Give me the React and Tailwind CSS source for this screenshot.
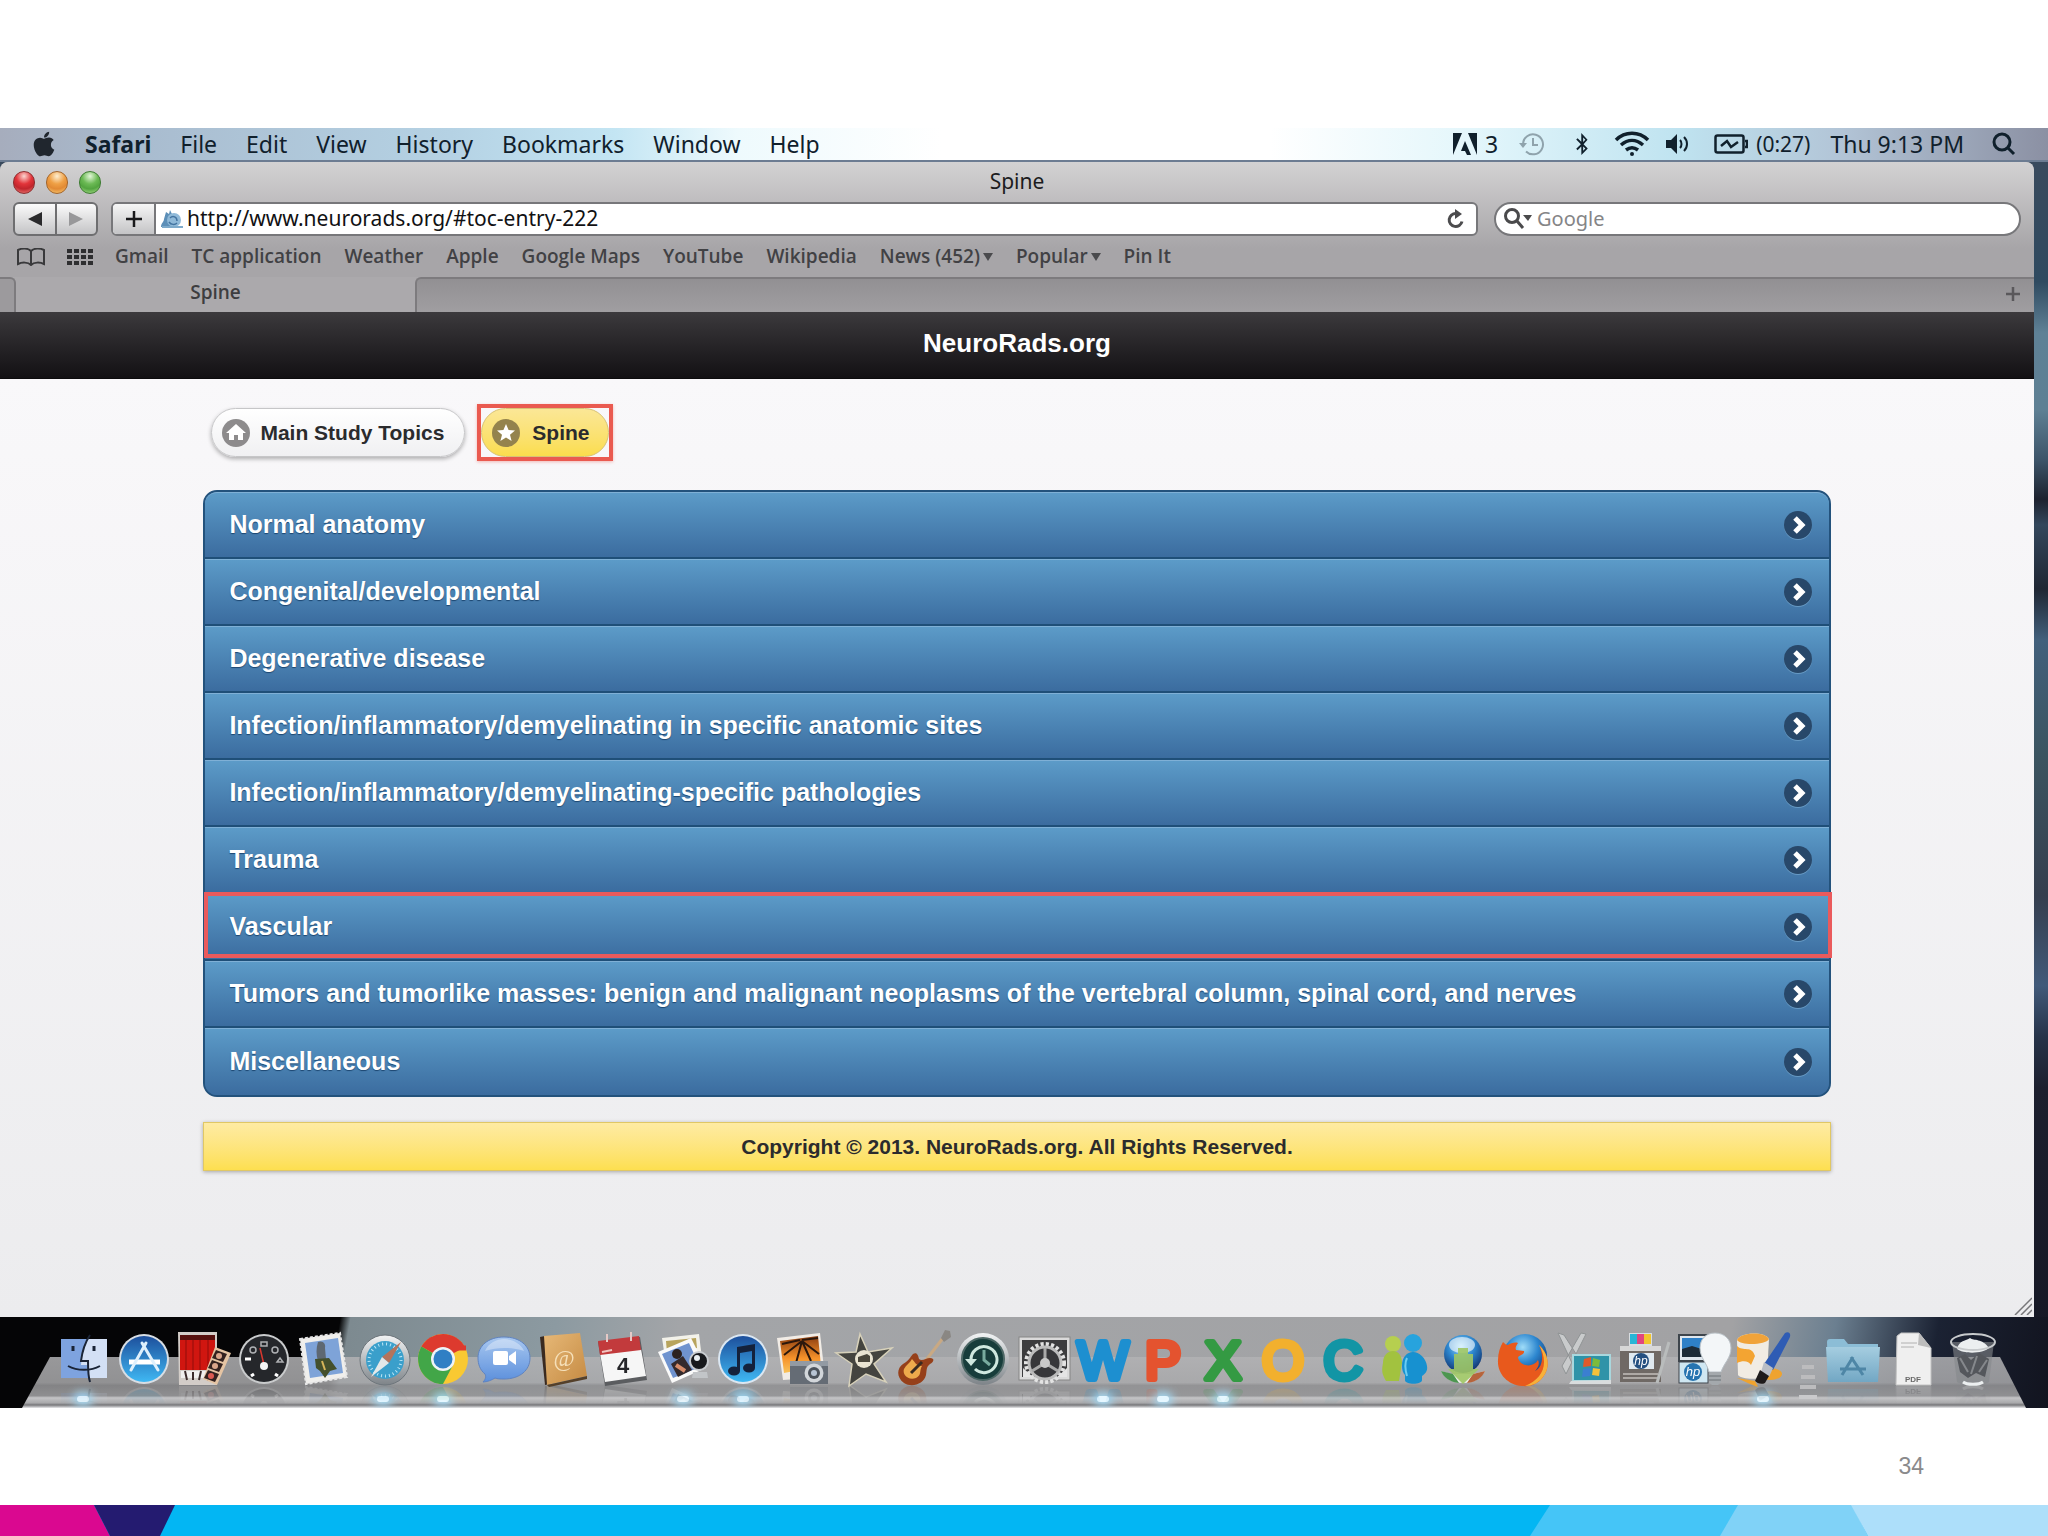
import { FaApple, FaBluetoothB } from "react-icons/fa";

const menus = ["File", "Edit", "View", "History", "Bookmarks", "Window", "Help"];

const bookmarks = [
  { label: "Gmail" },
  { label: "TC application" },
  { label: "Weather" },
  { label: "Apple" },
  { label: "Google Maps" },
  { label: "YouTube" },
  { label: "Wikipedia" },
  { label: "News (452)", menu: true },
  { label: "Popular", menu: true },
  { label: "Pin It" },
];

const topics = [
  "Normal anatomy",
  "Congenital/developmental",
  "Degenerative disease",
  "Infection/inflammatory/demyelinating in specific anatomic sites",
  "Infection/inflammatory/demyelinating-specific pathologies",
  "Trauma",
  "Vascular",
  "Tumors and tumorlike masses: benign and malignant neoplasms of the vertebral column, spinal cord, and nerves",
  "Miscellaneous",
];

// Shared gradients for the dock icons
function DockDefs() {
  return (
    <svg width="0" height="0" className="absolute" aria-hidden="true">
      <defs>
        <linearGradient id="blue" x1="0" y1="0" x2="0" y2="1">
          <stop offset="0" stopColor="#1d4f9c" />
          <stop offset="1" stopColor="#3fb8f3" />
        </linearGradient>
        <linearGradient id="pale" x1="0" y1="0" x2="0" y2="1">
          <stop offset="0" stopColor="#a9c8f0" />
          <stop offset="1" stopColor="#5b8fdc" />
        </linearGradient>
        <linearGradient id="steel" x1="0" y1="0" x2="0" y2="1">
          <stop offset="0" stopColor="#f2f4f5" />
          <stop offset="1" stopColor="#7d8388" />
        </linearGradient>
        <linearGradient id="sunset" x1="0" y1="0" x2="0" y2="1">
          <stop offset="0" stopColor="#8a3c10" />
          <stop offset="0.6" stopColor="#f6922a" />
          <stop offset="1" stopColor="#f9c35a" />
        </linearGradient>
        <linearGradient id="folder" x1="0" y1="0" x2="0" y2="1">
          <stop offset="0" stopColor="#a5cde0" />
          <stop offset="1" stopColor="#72a7c4" />
        </linearGradient>
        <linearGradient id="leather" x1="0" y1="0" x2="1" y2="1">
          <stop offset="0" stopColor="#e6b877" />
          <stop offset="1" stopColor="#c58a42" />
        </linearGradient>
        <radialGradient id="globe" cx="0.45" cy="0.3" r="0.7">
          <stop offset="0" stopColor="#9fdcf8" />
          <stop offset="0.5" stopColor="#2c86cf" />
          <stop offset="1" stopColor="#12346f" />
        </radialGradient>
      </defs>
    </svg>
  );
}

function Letter({ children, color }) {
  return (
    <text x="30" y="51" textAnchor="middle" fontFamily="Liberation Sans, sans-serif" fontSize="54" fill={color} stroke={color} strokeWidth="6" strokeLinejoin="round">
      {children}
    </text>
  );
}

const dockApps = [
  {
    name: "Finder",
    running: true,
    art: (
      <>
        <rect x="8" y="11" width="46" height="39" fill="#7ea3df" />
        <path d="M35 11h19v39H36c-1-5-1-9-1-13h-7c1-10 3-19 7-26z" fill="#d3e0f5" />
        <path d="M37 7c-6 9-8 18-9 26h7c0 8 0 15 2 21" fill="none" stroke="#1a2436" strokeWidth="2" />
        <path d="M15 38c9 5 23 5 32 0" fill="none" stroke="#1a2436" strokeWidth="2" />
        <path d="M20 18v5M41 18v5" stroke="#1a2436" strokeWidth="3" />
      </>
    ),
  },
  {
    name: "App Store",
    art: (
      <>
        <circle cx="31" cy="31" r="25" fill="#d8dee4" />
        <circle cx="31" cy="31" r="23" fill="url(#blue)" />
        <path d="M16 34h31" stroke="#fff" strokeWidth="5" />
        <path d="M33 15 18 42M29 15l16 27" stroke="#dff0fc" strokeWidth="3" strokeLinecap="round" />
      </>
    ),
  },
  {
    name: "Photo Booth",
    art: (
      <>
        <path d="M5 4h39v53H6z" fill="#d3cdc8" />
        <path d="M7 10h35v32H7z" fill="#d01610" />
        <path d="M7 7h35v5H7z" fill="#57100d" />
        <path d="M13 12v30M20 12v30M27 12v30M35 12v30" stroke="#b0110d" strokeWidth="2" />
        <path d="M8 43h34v7H8z" fill="#f1efee" />
        <path d="M12 43l2 9M20 44v8M28 43l-2 9M35 44v9" stroke="#3b2a2a" strokeWidth="2" />
        <path d="M42 19l16 6-14 32-14-6z" fill="#e5c4a3" />
        <path d="M43 22l11 4-4 8-11-4zM39 32l11 4-4 8-11-4zM35 42l11 4-4 8-11-4z" fill="#33211f" />
        <circle cx="46" cy="28" r="3" fill="#d9a58b" />
        <circle cx="42" cy="38" r="3" fill="#d9a58b" />
        <circle cx="38" cy="48" r="3" fill="#dc5a52" />
      </>
    ),
  },
  {
    name: "Dashboard",
    art: (
      <>
        <circle cx="31" cy="31" r="25" fill="#c9cbcc" />
        <circle cx="31" cy="31" r="23" fill="#25272b" />
        <g fill="none" stroke="#aeb0b3" strokeWidth="1.5">
          <circle cx="20" cy="22" r="3" />
          <circle cx="42" cy="22" r="3" />
          <path d="M28 14h6v4h-6zM44 34l3-4 3 4z" />
        </g>
        <path d="M12 31h6M21 46l-3 2M42 46l3 2" stroke="#fff" strokeWidth="3" />
        <path d="M31 37 27 20" stroke="#d8382f" strokeWidth="1.5" />
        <circle cx="31" cy="38" r="4" fill="#f5f5f5" />
      </>
    ),
  },
  {
    name: "Mail",
    art: (
      <>
        <path d="M7 11l40-6 7 44-41 7z" fill="#f0efec" stroke="#e6e6e6" strokeWidth="2" strokeDasharray="3 2" />
        <path d="M12 15l33-5 5 35-33 5z" fill="#7ea3d8" />
        <path d="M25 14c5-2 8 2 7 6l1 11-8 2c-2-6-2-13 0-19z" fill="#5e6872" />
        <path d="M22 31l14-1 8 11-7 2-5 7-5-7-4-3z" fill="#44502c" />
        <path d="M29 33l3 9" stroke="#d7b65a" strokeWidth="2" />
      </>
    ),
  },
  {
    name: "Safari",
    running: true,
    art: (
      <>
        <circle cx="32" cy="32" r="25" fill="url(#steel)" stroke="#6d757b" />
        <circle cx="32" cy="32" r="19" fill="#3a9fcb" />
        <circle cx="32" cy="32" r="16" fill="none" stroke="#bde6f5" strokeWidth="3" strokeDasharray="1 3" />
        <path d="M48 14 36 35l-7-6z" fill="#b4745c" />
        <path d="M18 49l11-20 7 6z" fill="#e3e8e9" />
      </>
    ),
  },
  {
    name: "Chrome",
    running: true,
    art: (
      <>
        <circle cx="30" cy="31" r="25" fill="#f9c932" />
        <path d="M30 31 8.400 18.500A25 25 0 0 1 52 19z" fill="#dd3a2e" />
        <path d="M30 31 8.400 18.500A25 25 0 0 0 30 56l10-19z" fill="#42a648" />
        <path d="M30 20h23" stroke="#dd3a2e" strokeWidth="5" />
        <circle cx="30" cy="31" r="12" fill="#eef3f6" />
        <circle cx="30" cy="31" r="9.500" fill="#2f7fc4" />
      </>
    ),
  },
  {
    name: "iChat",
    art: (
      <>
        <path d="M31 9c16 0 26 9 26 21S47 51 31 51c-3 0-7 0-9-1-3 2-8 4-12 4 3-3 3-6 2-8C7 42 5 36 5 30 5 18 15 9 31 9z" fill="url(#pale)" stroke="#5f83c0" />
        <path d="M12 23c3-8 12-12 19-12s17 4 20 12c-12-4-27-4-39 0z" fill="#fff" opacity="0.35" />
        <rect x="20" y="23" width="15" height="14" rx="2" fill="#fff" />
        <path d="M36 28l7-5v14l-7-5z" fill="#fff" />
      </>
    ),
  },
  {
    name: "Address Book",
    art: (
      <>
        <path d="M7 9l5-1 5 48-5 1z" fill="#3a2a20" />
        <path d="M11 8l36-3 7 43-40 9z" fill="url(#leather)" />
        <path d="M14 57l40-9v3l-38 8z" fill="#54402a" />
        <text x="31" y="38" textAnchor="middle" fontFamily="Liberation Serif, serif" fontSize="23" fill="#f5dfb8">@</text>
      </>
    ),
  },
  {
    name: "iCal",
    art: (
      <>
        <path d="M5 14l42-5 7 43-42 6z" fill="#5b5d60" />
        <path d="M7 25l41-4 5 27-41 6z" fill="#f6f6f6" />
        <path d="M5 13l41-5 2 14-41 5z" fill="#c23a3c" />
        <path d="M14 6v8M38 4v9" stroke="#e6c9c6" strokeWidth="2" />
        <path d="M9 24l10-2" stroke="#f1c3bf" strokeWidth="2" />
        <text x="30" y="45" textAnchor="middle" fontFamily="Liberation Sans, sans-serif" fontWeight="700" fontSize="22" fill="#26262a">4</text>
      </>
    ),
  },
  {
    name: "Preview",
    running: true,
    art: (
      <>
        <path d="M9 10l37-4 4 33-36 4z" fill="#f3f2ea" />
        <path d="M13 13l30-3 1 10-30 5z" fill="#b8a45c" />
        <path d="M5 24l33-14 15 30-34 15z" fill="#fafafa" />
        <path d="M9 26l27-11 11 24-27 11z" fill="#6f93cf" />
        <circle cx="24" cy="26" r="5" fill="#2c2220" />
        <path d="M18 36l12-8 9 14-14 7z" fill="#342a2c" />
        <path d="M23 37l9 6" stroke="#d68c6a" strokeWidth="4" />
        <circle cx="46" cy="33" r="9" fill="#17191d" stroke="#c8ccd0" strokeWidth="2" />
        <circle cx="44" cy="30" r="3" fill="#e8eef2" />
        <path d="M40 44h14l1 6H39z" fill="#c2c5c8" />
      </>
    ),
  },
  {
    name: "iTunes",
    running: true,
    art: (
      <>
        <circle cx="30" cy="31" r="25" fill="#dbe7f2" />
        <circle cx="30" cy="31" r="23" fill="url(#blue)" />
        <path d="M24 19l18-3v24h-3V23l-12 2v18h-3z" fill="#14223c" />
        <ellipse cx="21" cy="43" rx="6" ry="4.500" fill="#14223c" />
        <ellipse cx="36" cy="40" rx="6" ry="4.500" fill="#14223c" />
      </>
    ),
  },
  {
    name: "iPhoto",
    art: (
      <>
        <path d="M4 10l43-5 5 44-42 3z" fill="#f1ece6" />
        <path d="M7 13l38-5 3 30-37 7z" fill="url(#sunset)" />
        <path d="M29 13 11 27M29 13l-6 22M29 13l9 20M29 13l17 13M27 12l-18 4M29 12l16-2" stroke="#2b170c" strokeWidth="2" />
        <path d="M17 33h38v23H17z" fill="#656c75" />
        <path d="M17 33h38v5H17z" fill="#929aa3" />
        <circle cx="41" cy="45" r="9.500" fill="#d2d6da" />
        <circle cx="41" cy="45" r="6" fill="#4b525b" />
        <circle cx="41" cy="45" r="3" fill="#b7c4d4" />
      </>
    ),
  },
  {
    name: "iMovie",
    art: (
      <>
        <path d="M27 6l8 18 24-4-18 16 12 18-20-8-17 12 3-22L3 25l20-1z" fill="#44443f" stroke="#d7d1ba" strokeWidth="1.500" />
        <circle cx="31" cy="31" r="9" fill="#e9e4d2" />
        <path d="M25 29l9-3 3 2v6H25z" fill="#4a473c" />
      </>
    ),
  },
  {
    name: "GarageBand",
    art: (
      <>
        <path d="M30 36 50 10" stroke="#c9a983" strokeWidth="3" />
        <path d="M48 10l4-8 5 1 1 6-7 5z" fill="#8a8783" />
        <path d="M20 26c4-2 5 1 6 5 3 3 7-1 11-1 5 0 4 4 0 6-4 3-3 6-4 11-2 9-14 13-22 8-8-6-7-15-1-19 6-3 7-7 10-10z" fill="#96401a" />
        <path d="M19 31c3 3 4 7 10 7-3 5 0 9-6 12-8 3-14-4-12-9 2-4 6-6 8-10z" fill="#edaa4c" />
        <path d="M18 45l11-11" stroke="#3a2a20" strokeWidth="3" />
      </>
    ),
  },
  {
    name: "Time Machine",
    art: (
      <>
        <circle cx="30" cy="31" r="26" fill="url(#steel)" />
        <circle cx="30" cy="31" r="21" fill="#173d3b" stroke="#4c6765" strokeWidth="2" />
        <path d="M18 32a13 13 0 1 1 4 9" fill="none" stroke="#cfe8df" strokeWidth="3" />
        <path d="M12 31h12l-6 7z" fill="#cfe8df" />
        <path d="M31 22v10l6 5" fill="none" stroke="#78ab9f" strokeWidth="3" />
      </>
    ),
  },
  {
    name: "System Preferences",
    art: (
      <>
        <rect x="6" y="9" width="51" height="43" fill="#dadada" stroke="#868686" />
        <rect x="9" y="12" width="45" height="37" fill="#3c3c3e" />
        <path d="M12 49a20 20 0 1 1 40 0" fill="none" stroke="#d7d7d7" strokeWidth="0" />
        <circle cx="32" cy="35" r="18" fill="none" stroke="#e3e3e3" strokeWidth="6" strokeDasharray="3 2" />
        <circle cx="32" cy="35" r="16" fill="#37373a" stroke="#bcbcbc" strokeWidth="3" />
        <path d="M32 35V20M32 35l13 8M32 35l-13 8" stroke="#a9a9a9" strokeWidth="3" />
        <circle cx="32" cy="35" r="5" fill="#c9c9c9" />
        <path d="M10 40l10 9H10zM54 40l-10 9h10z" fill="#e5e5e5" />
      </>
    ),
  },
  { name: "Word", running: true, art: <Letter color="#1d8fd0">W</Letter> },
  { name: "PowerPoint", running: true, art: <Letter color="#e4532f">P</Letter> },
  { name: "Excel", running: true, art: <Letter color="#349a43">X</Letter> },
  { name: "Outlook", art: <Letter color="#f2b02e">O</Letter> },
  { name: "Communicator", art: <Letter color="#1295a5">C</Letter> },
  {
    name: "Messenger",
    art: (
      <>
        <circle cx="20" cy="16" r="8" fill="#b6cf4f" />
        <path d="M10 35c0-8 5-12 10-12s9 4 9 12l-3 18H13c-3-6-5-8-3-18z" fill="#a2c23f" />
        <circle cx="40" cy="15" r="9" fill="#27a3dd" />
        <path d="M29 38c0-9 5-14 11-14s13 6 14 14c1 5-2 8-5 10v4c0 5-17 5-17 0v-5c-2-2-3-5-3-9z" fill="#1791d0" />
        <path d="M34 30c-2 4-2 11 0 18" stroke="#6ccdf2" strokeWidth="2" fill="none" />
      </>
    ),
  },
  {
    name: "Download Manager",
    art: (
      <>
        <circle cx="30" cy="26" r="19" fill="url(#globe)" />
        <ellipse cx="29" cy="17" rx="13" ry="8" fill="#fff" opacity="0.6" />
        <path d="M8 43c4 8 12 12 22 12s18-4 22-12l-12 3H18z" fill="#edf0ea" />
        <path d="M52 43c-3 7-9 11-18 12l6-9z" fill="#b6643c" />
        <path d="M8 43c3 7 9 11 18 12l-6-9z" fill="#4d9650" />
        <path d="M25 20h10v6h5v15h6L30 56 15 41h6V26h4z" fill="#9fc765" opacity="0.9" />
      </>
    ),
  },
  {
    name: "Firefox",
    art: (
      <>
        <circle cx="32" cy="28" r="22" fill="url(#globe)" />
        <path d="M10 14c2 2 3 3 5 3 3-2 7-3 10-2-2 3-3 5-2 7l8 1c1 4-6 4-6 7 3 9 15 10 20 2 2 4 0 8-3 11 8-4 9-16 4-26 9 8 11 20 6 29-5 9-13 13-23 12C14 57 4 45 5 32c0-7 2-13 5-18z" fill="#e8591c" />
        <path d="M46 17c9 8 11 20 6 29-5 9-13 12-20 12 12-5 19-13 19-24 0-6-2-12-5-17z" fill="#f6b13a" />
      </>
    ),
  },
  {
    name: "Remote Desktop",
    art: (
      <>
        <path d="M5 5l6 2 14 22-6 6zM33 6l-5-1L9 38l4 8z" fill="#c9cbcc" stroke="#8f9394" />
        <rect x="20" y="27" width="37" height="26" fill="#2f93a8" stroke="#a9d7dd" strokeWidth="2" />
        <path d="M18 53l40-1v4H16z" fill="#d9dcdd" />
        <path d="M31 31l7-2v9l-8 1z" fill="#df5a2c" />
        <path d="M40 30l7 2-1 7-7-1z" fill="#7dbb3c" />
        <path d="M30 41l8-1-1 8-8 1z" fill="#3b7fd0" />
        <path d="M40 40l7 1-1 7-7-1z" fill="#f3c13a" />
      </>
    ),
  },
  {
    name: "HP Device Manager",
    art: (
      <>
        <path d="M16 5h23v13H16z" fill="#d9dde0" />
        <path d="M17 6h7v10h-7z" fill="#29b6d6" />
        <path d="M24 6h7v10h-7z" fill="#e1467f" />
        <path d="M31 6h7v10h-7z" fill="#f2c62d" />
        <path d="M7 18h41v36H7z" fill="#6f6965" />
        <path d="M7 18h41v5H7z" fill="#d7d7d7" />
        <rect x="16" y="25" width="25" height="16" fill="#dfe9f0" />
        <circle cx="28" cy="33" r="8" fill="#234f80" />
        <text x="28" y="37" textAnchor="middle" fontFamily="Liberation Sans, sans-serif" fontStyle="italic" fontSize="12" fill="#fff">hp</text>
        <path d="M10 46h35M10 50h35" stroke="#c3bfbb" strokeWidth="1.500" />
        <path d="M56 14 44 55" stroke="#b9bcbc" strokeWidth="3" />
      </>
    ),
  },
  {
    name: "HP Utility",
    art: (
      <>
        <rect x="6" y="7" width="29" height="26" fill="#dfe7ee" stroke="#3e454c" strokeWidth="2" />
        <path d="M9 10h23v13H9z" fill="#2e80c7" />
        <path d="M9 21l10-3 13 4v7H9z" fill="#1c2b38" />
        <rect x="6" y="34" width="29" height="21" fill="#cfe7f2" stroke="#3e454c" />
        <circle cx="20" cy="44" r="9" fill="#2774b0" />
        <text x="20" y="48" textAnchor="middle" fontFamily="Liberation Sans, sans-serif" fontStyle="italic" fontSize="13" fill="#fff">hp</text>
        <path d="M42 5c9 0 16 6 16 15 0 10-7 15-10 24H36c-2-9-9-14-9-24 0-9 6-15 15-15z" fill="#f3f6f8" stroke="#b8c0c6" />
        <path d="M36 44h12v10l-3 3h-6l-3-3z" fill="#a4a9ad" />
        <path d="M36 48h12M36 52h12" stroke="#6d7276" />
      </>
    ),
  },
  {
    name: "Paint",
    running: true,
    art: (
      <>
        <ellipse cx="37" cy="46" rx="12" ry="6" fill="#eea32f" />
        <path d="M4 12c3-8 28-9 32-1l-2 36c-5 5-25 5-29 0z" fill="#f1ece3" />
        <path d="M4 12c3-8 28-9 32-1-3 6-28 7-32 1z" fill="#f0a33a" />
        <path d="M4 18c6 6 15-1 18 10l-4 9c-2-4-8-5-14-2z" fill="#f3a432" />
        <path d="M52 5c4-2 7 1 4 6L40 42l-9-6z" fill="#2f5cb4" />
        <path d="M31 34l9 6-4 9-8-5z" fill="#b9bec5" />
        <path d="M27 42l9 6-4 7c-4 2-8 0-10-2z" fill="#1e1b1b" />
        <path d="M4 50l18 3 3 6-8-3z" fill="#eea32f" />
      </>
    ),
  },
];

const dockStack = [
  {
    name: "Applications",
    art: (
      <>
        <path d="M4 14c0-2 1-3 3-3h14l4 5h30v33H5z" fill="#8cbdd6" />
        <path d="M3 19h54l-2 35H5z" fill="url(#folder)" />
        <path d="M30 29 19 47M28 29l12 18M17 41h26" stroke="#4e86a6" strokeWidth="3" />
      </>
    ),
  },
  {
    name: "Document",
    art: (
      <>
        <path d="M14 8l4-3h18l12 15v37H13z" fill="#efefef" stroke="#c2c2c2" />
        <path d="M36 5l12 15-13-3z" fill="#bcbcbc" />
        <path d="M18 15h16M18 19h13" stroke="#b0b0b0" />
        <text x="30" y="54" textAnchor="middle" fontFamily="Liberation Sans, sans-serif" fontWeight="700" fontSize="8" fill="#6a6a6a">PDF</text>
      </>
    ),
  },
  {
    name: "Trash",
    art: (
      <>
        <path d="M9 14h42l-5 40c-5 4-27 4-32 0z" fill="#85888c" opacity="0.6" />
        <path d="M14 30l8-4 6 6 8-7 10 6-4 18-9-4-8 5-8-6z" fill="#54575c" />
        <path d="M17 30l8 14M34 28l-6 18M44 32l-8 12" stroke="#85888c" strokeWidth="2" />
        <path d="M14 21c2-9 9-8 13-11 4 3 12 0 19 10-6 6-26 6-32 1z" fill="#eceff0" />
        <ellipse cx="30" cy="14" rx="22" ry="8" fill="none" stroke="#c7cacc" strokeWidth="2" />
        <path d="M20 54c4 3 16 3 20 0" stroke="#eceff0" strokeWidth="3" fill="none" />
      </>
    ),
  },
];

function DockIcon({ app }) {
  return (
    <button type="button" aria-label={app.name} className="flex w-[60px] flex-col items-center pt-[11px]">
      <svg viewBox="0 0 60 64" className="block h-16 w-[60px] overflow-visible [-webkit-box-reflect:below_-13px_linear-gradient(transparent_60%,rgba(0,0,0,0.3))]">
        {app.art}
      </svg>
      {app.running && (
        <span className="mt-1 h-1.5 w-3 rounded-full bg-[#e6f7ff] shadow-[0_0_8px_4px_#a5d8f2]" />
      )}
    </button>
  );
}

function MenuBar() {
  return (
    <header className="flex h-[34px] items-center justify-between border-b-2 border-[#6c7c92] bg-[linear-gradient(90deg,#a6adbd_0%,#a9bccf_7%,#b5d2e4_22%,#c3e5f3_30%,#eefafd_36%,#ffffff_46%,#ffffff_62%,#e3f6fb_72%,#bfe3f0_82%,#b2c4d6_90%,#8b90a3_100%)] pl-8 pr-8 font-['Noto_Sans','Open_Sans',sans-serif] text-[23px] leading-8 text-[#10202c]">
      <nav className="flex items-center gap-[29px]">
        <button type="button" aria-label="Apple menu">
          <FaApple className="h-7 w-6 text-[#20262e]" />
        </button>
        <button type="button" className="font-bold">Safari</button>
        {menus.map((m) => (
          <button type="button" key={m}>{m}</button>
        ))}
      </nav>
      <div className="flex items-center">
        <svg viewBox="0 0 24 22" className="h-[22px] w-6">
          <path d="M0 0h9L0 22zM15 0h9v22zM12 8l6 14h-4l-2-4H8z" fill="#10202c" />
        </svg>
        <span className="ml-2">3</span>
        <svg viewBox="0 0 28 24" className="ml-5 h-6 w-7" fill="none" stroke="#8fa3ac" strokeWidth="2">
          <path d="M5 12a10 10 0 1 1 3 7.500" />
          <path d="M15 6v7h5" />
          <path d="M1 11h8l-4 5z" fill="#8fa3ac" stroke="none" />
        </svg>
        <FaBluetoothB className="ml-7 h-[22px] w-4" />
        <svg viewBox="0 0 36 26" className="ml-6 h-[26px] w-9" fill="none" stroke="#10202c" strokeWidth="3.500">
          <path d="M2 9c9-9 23-9 32 0" />
          <path d="M7 14c7-6 15-6 22 0" />
          <path d="M12 19c4-3 8-3 12 0" />
          <circle cx="18" cy="23" r="2" fill="#10202c" stroke="none" />
        </svg>
        <svg viewBox="0 0 24 20" className="ml-4 h-5 w-6">
          <path d="M0 6h5l6-6v20l-6-6H0z" fill="#10202c" />
          <path d="M14 6c2 2 2 6 0 8M18 3c4 4 4 10 0 14" fill="none" stroke="#10202c" strokeWidth="2" />
        </svg>
        <svg viewBox="0 0 34 20" className="ml-6 h-5 w-[34px]" fill="none" stroke="#10202c" strokeWidth="2.500">
          <rect x="1.500" y="1.500" width="28" height="17" rx="2" />
          <path d="M31 7h2v6h-2" />
          <path d="M7 12l6-5 4 6 7-5" />
        </svg>
        <span className="ml-2 text-[21px]">(0:27)</span>
        <span className="ml-5">Thu 9:13 PM</span>
        <button type="button" aria-label="Spotlight" className="ml-7">
          <svg viewBox="0 0 24 24" className="h-6 w-6" fill="none" stroke="#10202c" strokeWidth="3">
            <circle cx="10" cy="10" r="8" />
            <path d="M16 16l6 6" />
          </svg>
        </button>
      </div>
    </header>
  );
}

function Toolbar() {
  return (
    <div className="flex h-[34px] items-stretch px-[13px] font-['Noto_Sans','Open_Sans',sans-serif]">
      <div className="flex w-[85px] rounded-md border-2 border-[#6e6e70] bg-gradient-to-b from-[#fbfbfb] to-[#c4c4c6]">
        <button type="button" aria-label="Back" className="flex flex-1 items-center justify-center border-r-2 border-[#6e6e70]">
          <svg viewBox="0 0 14 14" className="h-3.5 w-3.5"><path d="M14 0v14L0 7z" fill="#2a2a2c" /></svg>
        </button>
        <button type="button" aria-label="Forward" className="flex flex-1 items-center justify-center">
          <svg viewBox="0 0 14 14" className="h-3.5 w-3.5"><path d="M0 0v14l14-7z" fill="#98989a" /></svg>
        </button>
      </div>
      <div className="ml-[13px] flex flex-1 items-stretch overflow-hidden rounded-md border-2 border-[#77777a] bg-white">
        <button type="button" aria-label="Add bookmark" className="flex w-[43px] items-center justify-center border-r-2 border-[#77777a] bg-gradient-to-b from-[#f6f6f6] to-[#c4c4c6]">
          <svg viewBox="0 0 16 16" className="h-4 w-4"><path d="M8 0v16M0 8h16" stroke="#19191b" strokeWidth="2.500" /></svg>
        </button>
        <svg viewBox="0 0 24 20" className="ml-1 h-5 w-6 self-center">
          <path d="M1 18c0-4 3-5 3-8l2-7 3 2 1-4 3 6-2 11z" fill="#5c8fb8" />
          <circle cx="14" cy="11" r="7" fill="#8fb9d8" />
          <path d="M10 9c3-3 7-1 7 3M9 13c2 3 6 3 8 1" stroke="#4273a0" strokeWidth="1.500" fill="none" />
          <path d="M2 18h21" stroke="#7daacb" strokeWidth="2" />
        </svg>
        <input aria-label="Address" defaultValue="http://www.neurorads.org/#toc-entry-222" className="min-w-0 flex-1 bg-transparent px-[3px] text-[21px] text-[#111113] outline-none" />
        <button type="button" aria-label="Reload" className="mr-3 self-center">
          <svg viewBox="0 0 18 20" className="h-5 w-[18px]" fill="none" stroke="#4c4c4e" strokeWidth="3">
            <path d="M10 4.500a6.500 6.500 0 1 0 6 8" />
            <path d="M9 0l7 5-7 5z" fill="#4c4c4e" stroke="none" />
          </svg>
        </button>
      </div>
      <label className="ml-4 flex w-[527px] items-center rounded-full border-2 border-[#77777a] bg-white pl-2">
        <svg viewBox="0 0 30 22" className="h-[22px] w-[30px]" fill="none" stroke="#4a4a4c" strokeWidth="3">
          <circle cx="8" cy="8" r="6.500" />
          <path d="M13 13l6 7" />
          <path d="M19 7h9l-4 6z" fill="#4a4a4c" stroke="none" />
        </svg>
        <input aria-label="Search" placeholder="Google" className="min-w-0 flex-1 bg-transparent px-[3px] text-[20px] outline-none placeholder:text-[#858587]" />
      </label>
    </div>
  );
}

function BookmarksBar() {
  return (
    <div className="flex h-[41px] items-center pl-[17px] font-['Open_Sans','Noto_Sans',sans-serif] text-[19px] font-semibold text-[#414144]">
      <button type="button" aria-label="Show all bookmarks">
        <svg viewBox="0 0 28 18" className="h-[18px] w-7" fill="none" stroke="#39393b" strokeWidth="2">
          <path d="M14 3C11 0 5 0 1 2v14c4-2 10-2 13 1 3-3 9-3 13-1V2c-4-2-10-2-13 1zM14 3v14" />
        </svg>
      </button>
      <button type="button" aria-label="Top sites" className="ml-[22px] grid grid-cols-4 gap-x-[2px] gap-y-[2px]">
        {Array.from({ length: 12 }, (_, i) => (
          <span key={i} className="h-1 w-[5px] bg-[#2e2e30]" />
        ))}
      </button>
      <nav className="ml-[22px] flex items-center gap-[23px]">
        {bookmarks.map((b) => (
          <a key={b.label} href="#bookmark" className="flex items-center gap-[3px]">
            {b.label}
            {b.menu && (
              <svg viewBox="0 0 10 8" className="h-2 w-2.5"><path d="M0 0h10L5 8z" fill="#4a4a4d" /></svg>
            )}
          </a>
        ))}
      </nav>
    </div>
  );
}

function TabBar() {
  return (
    <div className="flex h-[35px] items-stretch bg-[#aba9ac] font-['Open_Sans','Noto_Sans',sans-serif] text-[19px] font-semibold text-[#3d3d40]">
      <div className="w-4 rounded-tr-md border-r-2 border-t-2 border-[#7d7b7e] bg-[#9c9a9d]" />
      <button type="button" className="w-[399px] bg-[#aba9ac] pb-1 text-center">Spine</button>
      <div className="flex flex-1 items-center justify-end rounded-tl-md border-l-2 border-t-2 border-[#7d7b7e] bg-gradient-to-b from-[#929093] to-[#a09ea1] pb-1 pr-3.5">
        <button type="button" aria-label="New tab">
          <svg viewBox="0 0 14 14" className="h-3.5 w-3.5"><path d="M7 0v14M0 7h14" stroke="#5a585b" strokeWidth="2.500" /></svg>
        </button>
      </div>
    </div>
  );
}

function TopicRow({ label }) {
  const highlighted = label === "Vascular";
  return (
    <li className="relative border-b-2 border-[#1f4f78] last:border-b-0">
      <a
        href="#topic"
        className="flex h-[65px] items-center justify-between border-t border-[#7fb0d6] bg-gradient-to-b from-[#5c9bc8] to-[#3b6c9f] pl-6 pr-4 text-[25px] font-bold text-white [text-shadow:0_1px_1px_#1c4670]"
      >
        <span>{label}</span>
        <svg viewBox="0 0 30 30" className="h-[30px] w-[30px]">
          <circle cx="15" cy="16" r="14" fill="#7fb0d6" opacity="0.6" />
          <circle cx="15" cy="15" r="14" fill="#28486a" />
          <path d="M12 8l7 7-7 7" fill="none" stroke="#fff" strokeWidth="5" />
        </svg>
      </a>
      {highlighted && (
        <div className="pointer-events-none absolute -left-px -right-[3px] -top-0.5 bottom-px border-4 border-[#ea5a5c]" />
      )}
    </li>
  );
}

function Page() {
  return (
    <div className="flex flex-1 flex-col font-['Liberation_Sans',Arial,sans-serif]">
      <h1 className="flex h-[67px] items-center justify-center border-b border-[#0c0b0d] bg-gradient-to-b from-[#3c3a3d] to-[#131114] pb-1 text-[26px] font-bold text-white">
        NeuroRads.org
      </h1>
      <main className="relative flex-1 bg-gradient-to-b from-[#f9f8fa] to-[#ececee] px-[10%] pt-[25px]">
        <div className="flex items-center gap-3 pl-2">
          <a href="#topics" className="flex h-[49px] items-center gap-2.5 rounded-full border border-[#c6c6c8] bg-gradient-to-b from-white to-[#f0f0f2] pl-2.5 pr-5 text-[21px] font-bold text-[#2b2b2d] shadow-[0_2px_4px_rgba(0,0,0,0.3)]">
            <svg viewBox="0 0 28 28" className="h-7 w-7">
              <circle cx="14" cy="14" r="14" fill="#8d8b8c" />
              <path d="M14 5l10 9h-3v7h-5v-5h-4v5H7v-7H4z" fill="#fff" />
            </svg>
            Main Study Topics
          </a>
          <div className="border-4 border-[#ea5a50] shadow-[0_1px_3px_rgba(234,90,80,0.4)]">
            <a href="#spine" className="flex h-[49px] items-center gap-3 rounded-full border border-[#d8c276] bg-gradient-to-b from-[#fbe796] to-[#fbdd4c] pl-2.5 pr-[18px] text-[21px] font-bold text-[#2b2b2d]">
              <svg viewBox="0 0 28 28" className="h-7 w-7">
                <circle cx="14" cy="14" r="14" fill="#94834d" />
                <path d="M14 5l2.600 6 6.400.500-5 4.200 1.600 6.300-5.600-3.500L8.400 22l1.600-6.300-5-4.200 6.400-.500z" fill="#fff" />
              </svg>
              Spine
            </a>
          </div>
        </div>
        <ul className="mt-[29px] rounded-[14px] border-2 border-[#23527c] bg-[#3b6c9f] [&>li:first-child>a]:rounded-t-[12px] [&>li:last-child>a]:h-[67px] [&>li:last-child>a]:rounded-b-[12px]">
          {topics.map((t) => (
            <TopicRow key={t} label={t} />
          ))}
        </ul>
        <footer className="mt-[25px] flex h-[49px] items-center justify-center border border-[#e0c765] bg-gradient-to-b from-[#feeba3] to-[#fddf4f] text-[21px] font-bold text-[#2b2b2d] shadow-[0_1px_4px_rgba(0,0,0,0.3)]">
          Copyright © 2013. NeuroRads.org. All Rights Reserved.
        </footer>
        <svg viewBox="0 0 18 18" className="absolute bottom-0.5 right-0.5 h-[18px] w-[18px]">
          <path d="M1 18 18 1M7 18 18 7M13 18l5-5" stroke="#77777a" strokeWidth="1.500" />
        </svg>
      </main>
    </div>
  );
}

function BrowserWindow() {
  return (
    <section className="mr-3.5 flex flex-1 flex-col overflow-hidden rounded-t-lg bg-[#aba9ac]">
      <div className="flex flex-col bg-gradient-to-b from-[#d3d2d3] to-[#a7a5a8] to-75%">
        <div className="relative flex h-10 items-center justify-center">
          <div className="absolute left-[13px] flex gap-[11px]">
            <button type="button" aria-label="Close" className="h-[23px] w-[22px] rounded-full border border-[#8d2f31] bg-[radial-gradient(circle_at_50%_20%,#fbd5d0_0%,#e2343a_40%,#c0252c_65%,#f58c85_100%)]" />
            <button type="button" aria-label="Minimize" className="h-[23px] w-[22px] rounded-full border border-[#a4662c] bg-[radial-gradient(circle_at_50%_20%,#fdeed0_0%,#efa045_40%,#e28a34_65%,#fbd57e_100%)]" />
            <button type="button" aria-label="Zoom" className="h-[23px] w-[22px] rounded-full border border-[#3f7d34] bg-[radial-gradient(circle_at_50%_20%,#e2f6d8_0%,#6cba55_40%,#52a43f_65%,#b4e595_100%)]" />
          </div>
          <span className="font-['Noto_Sans','Open_Sans',sans-serif] text-[21px] text-[#1c1c1e]">Spine</span>
        </div>
        <Toolbar />
        <BookmarksBar />
      </div>
      <TabBar />
      <Page />
    </section>
  );
}

function Dock() {
  return (
    <div className="relative flex h-[91px] justify-center overflow-hidden bg-[linear-gradient(100deg,#050506_0%,#050506_16.5%,#7d8a90_17%,#8c9aa1_27%,#a3a5a8_33%,#a2a2a4_84%,#6b7f90_89%,#1b2233_94%,#12141f_100%)]">
      {/* glass shelf */}
      <div className="absolute inset-x-[22px] bottom-0 top-10 bg-[linear-gradient(180deg,rgba(178,178,180,0.85)_0%,rgba(170,170,172,0.85)_50%,rgba(145,145,147,0.9)_56%,rgba(150,150,152,0.95)_76%,#c4c4c6_80%,#a9a9ab_90%,#77777a_94%,#e8e8ea_100%)] [clip-path:polygon(28px_0,calc(100%_-_26px)_0,100%_100%,0_100%)]" />
      <DockDefs />
      <nav aria-label="Dock" className="relative flex pl-2">
        {dockApps.map((app) => (
          <DockIcon key={app.name} app={app} />
        ))}
        <div className="flex w-[30px] flex-col items-center gap-1.5 pt-[48px]">
          <span className="h-1 w-3 bg-[#bcbcbe]" />
          <span className="h-1 w-3.5 bg-[#bcbcbe]" />
          <span className="h-1 w-4 bg-[#bcbcbe]" />
          <span className="h-1 w-[18px] bg-[#cacacc]" />
        </div>
        {dockStack.map((app) => (
          <DockIcon key={app.name} app={app} />
        ))}
      </nav>
    </div>
  );
}

export default function App() {
  return (
    <div className="flex min-h-screen flex-col bg-white pt-32">
      <div className="flex flex-1 flex-col bg-[linear-gradient(180deg,#3c4a5c_0%,#2f4a60_12%,#5f8196_16%,#5f8094_22%,#3c5368_26%,#1d222f_29%,#33475c_31%,#1f2633_36%,#42607c_40%,#3b5460_49%,#353e4e_60%,#415a7a_67%,#263349_71%,#1c1f2e_75%,#141622_100%)]">
        <MenuBar />
        <BrowserWindow />
        <Dock />
      </div>
      <div className="flex h-[97px] items-center justify-end pr-[124px] pt-5 font-['Liberation_Sans',Arial,sans-serif] text-[23px] text-[#8a8a8c]">
        34
      </div>
      <svg viewBox="0 0 2048 31" preserveAspectRatio="none" className="block h-[31px] w-full" aria-hidden="true">
        <rect width="2048" height="31" fill="#03b6f3" />
        <path d="M0 0h94l16 31H0z" fill="#da0890" />
        <path d="M94 0h81l-15 31h-50z" fill="#241b70" />
        <path d="M1550 0h190l-18 31h-192z" fill="#45c5f7" />
        <path d="M1738 0h114l16 31h-148z" fill="#80d2f7" />
        <path d="M1851 0h197v31h-180z" fill="#addffa" />
      </svg>
    </div>
  );
}
